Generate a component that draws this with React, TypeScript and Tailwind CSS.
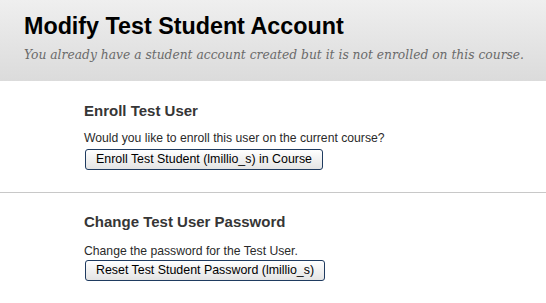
export default function App() {
  return (
    <div className="h-[303px] w-[546px] overflow-hidden bg-white font-['Liberation_Sans',Arial,sans-serif]">
      <header className="h-[81px] bg-gradient-to-b from-[#efefef] to-[#dbdbdb] pl-[24px] pt-[12px]">
        <h1 className="text-[23.3px] font-bold leading-[28px] text-black">Modify Test Student Account</h1>
        <p className="mt-[7px] font-['DejaVu_Serif',serif] text-[12.3px] italic leading-[16px] text-[#6a6a6a]">
          You already have a student account created but it is not enrolled on this course.
        </p>
      </header>
      <section className="px-[84px] pt-[20px]">
        <h2 className="text-[15px] font-bold leading-[20px] text-[#363636]">Enroll Test User</h2>
        <p className="mt-[10px] text-[12.2px] leading-[15px] text-[#2a2a2a]">Would you like to enroll this user on the current course?</p>
        <button className="ml-px mt-[3px] block h-[21px] rounded-[3px] border border-[#1f3b60] bg-gradient-to-b from-white to-[#e4e4e4] px-[10px] text-[12.4px] leading-[19px] text-black">
          Enroll Test Student (lmillio_s) in Course
        </button>
      </section>
      <hr className="mt-[22px] border-t border-[#c8c8c8]" />
      <section className="px-[84px] pt-[19px]">
        <h2 className="text-[15px] font-bold leading-[20px] text-[#363636]">Change Test User Password</h2>
        <p className="mt-[12px] text-[12.2px] leading-[15px] text-[#2a2a2a]">Change the password for the Test User.</p>
        <button className="ml-px mt-[1px] block h-[21px] rounded-[3px] border border-[#1f3b60] bg-gradient-to-b from-white to-[#e4e4e4] px-[10px] text-[12.4px] leading-[19px] text-black">
          Reset Test Student Password (lmillio_s)
        </button>
      </section>
    </div>
  );
}
